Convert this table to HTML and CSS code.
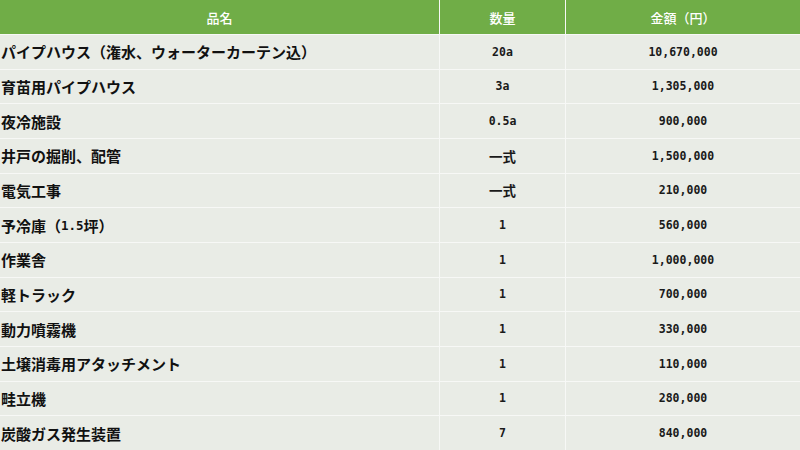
FILE: index.html
```html
<!DOCTYPE html>
<html lang="ja">
<head>
<meta charset="utf-8">
<link rel="stylesheet" href="styles.css">
</head>
<body>
<div class="table">
  <div class="cell head">品名</div>
  <div class="cell head">数量</div>
  <div class="cell head">金額（円）</div>

  <div class="cell name">パイプハウス（潅水、ウォーターカーテン込）</div>
  <div class="cell num">20a</div>
  <div class="cell num">10,670,000</div>

  <div class="cell name">育苗用パイプハウス</div>
  <div class="cell num">3a</div>
  <div class="cell num">1,305,000</div>

  <div class="cell name">夜冷施設</div>
  <div class="cell num">0.5a</div>
  <div class="cell num">900,000</div>

  <div class="cell name">井戸の掘削、配管</div>
  <div class="cell num jp">一式</div>
  <div class="cell num">1,500,000</div>

  <div class="cell name">電気工事</div>
  <div class="cell num jp">一式</div>
  <div class="cell num">210,000</div>

  <div class="cell name">予冷庫（<span class="mono">1.5</span>坪）</div>
  <div class="cell num">1</div>
  <div class="cell num">560,000</div>

  <div class="cell name">作業舎</div>
  <div class="cell num">1</div>
  <div class="cell num">1,000,000</div>

  <div class="cell name">軽トラック</div>
  <div class="cell num">1</div>
  <div class="cell num">700,000</div>

  <div class="cell name">動力噴霧機</div>
  <div class="cell num">1</div>
  <div class="cell num">330,000</div>

  <div class="cell name">土壌消毒用アタッチメント</div>
  <div class="cell num">1</div>
  <div class="cell num">110,000</div>

  <div class="cell name">畦立機</div>
  <div class="cell num">1</div>
  <div class="cell num">280,000</div>

  <div class="cell name">炭酸ガス発生装置</div>
  <div class="cell num">7</div>
  <div class="cell num">840,000</div>
</div>
</body>
</html>
```
FILE: styles.css
```css
html, body {
  margin: 0;
  padding: 0;
  background: #f7f8f6;
}

.table {
  width: 800px;
  height: 450px;
  display: grid;
  grid-template-columns: 439px 125px 1fr;
  grid-template-rows: 34px repeat(12, 1fr);
  column-gap: 1px;
  row-gap: 1px;
  background: #f7f8f6;
  font-family: "Noto Sans CJK JP", sans-serif;
  font-weight: 700;
  font-size: 15px;
  color: #111;
}

.cell {
  display: flex;
  align-items: center;
  background: #e9ece6;
  white-space: nowrap;
}

.head {
  background: #70ad47;
  color: #fff;
  justify-content: center;
  font-size: 13px;
  font-weight: 500;
}

.name {
  padding-left: 1px;
}

.mono {
  font-family: "DejaVu Sans Mono", monospace;
  font-size: 12.5px;
}

.num {
  justify-content: center;
  font-family: "DejaVu Sans Mono", monospace;
  font-size: 11.5px;
  font-weight: 700;
  color: #1a1a1a;
}

.num.jp {
  font-family: "Noto Sans CJK JP", sans-serif;
  font-size: 13.5px;
  font-weight: 700;
}
```
